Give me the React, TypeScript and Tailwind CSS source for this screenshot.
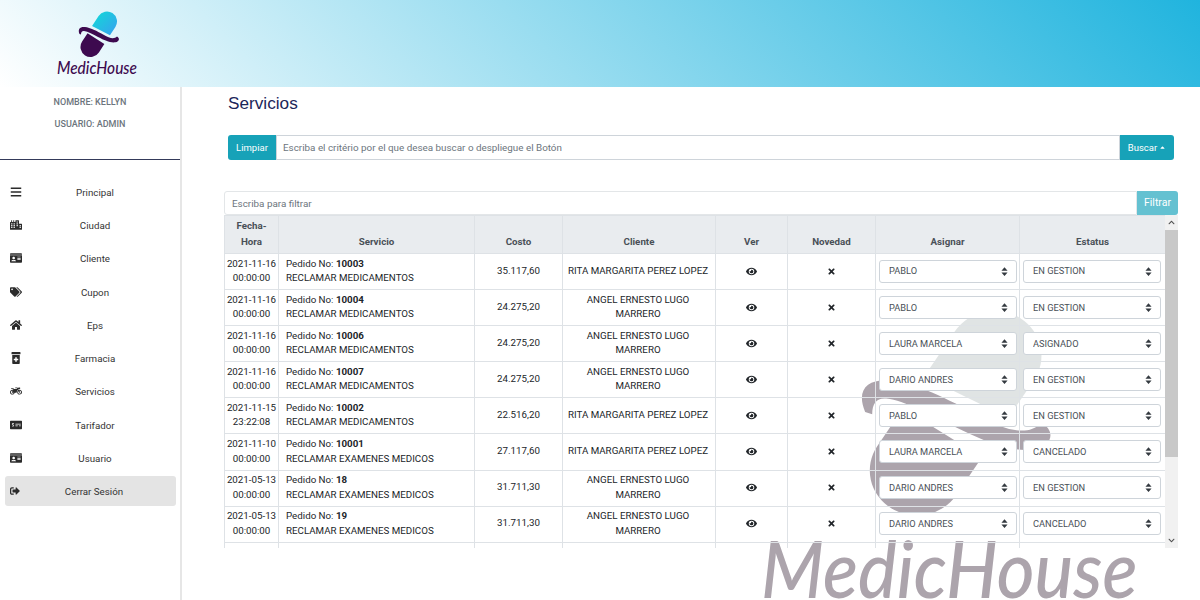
import React from "react";
import { FaBars, FaCity, FaIdCard, FaTags, FaHome, FaPrescriptionBottleAlt, FaMotorcycle, FaMoneyCheckAlt, FaSignOutAlt, FaEye, FaTimes, FaCaretUp, FaChevronUp, FaChevronDown } from "react-icons/fa";

function Logo({ top, bottom, id, className }: { top: string; bottom: string; id: string; className: string }) {
  return (
    <svg viewBox="75 8 50 52" preserveAspectRatio="none" className={className}>
      <defs>
        <linearGradient id={id} x1="0" y1="0" x2="1" y2="1">
          <stop offset="0" stopColor={top === "grad" ? "#0fdcd6" : top} />
          <stop offset="1" stopColor={top === "grad" ? "#3a9ff0" : top} />
        </linearGradient>
      </defs>
      <path d="M92.06 26.1 L98.6 16.05 A10 10 0 0 1 115.4 26.95 L109.95 35.3 Z" fill={`url(#${id})`} />
      <path d="M87.55 33.17 L104.35 44.07 L98.9 52.45 A10 10 0 0 1 82.1 41.55 Z" fill={bottom} />
      <path d="M79.5 34 C77.5 29 80 26.5 85 27 C90 27.5 97 31 104 35 C109 38 114 39.5 117 36.5 C120 38 119.5 41.5 115.5 42.3 C110 43 105 40.5 98 37 C93 34.5 88 31.5 84 31 C82 30.8 81 32 81 34.5 Z" fill={bottom} />
    </svg>
  );
}

const menu: [string, React.ComponentType<{ className?: string }>][] = [
  ["Principal", FaBars],
  ["Ciudad", FaCity],
  ["Cliente", FaIdCard],
  ["Cupon", FaTags],
  ["Eps", FaHome],
  ["Farmacia", FaPrescriptionBottleAlt],
  ["Servicios", FaMotorcycle],
  ["Tarifador", FaMoneyCheckAlt],
  ["Usuario", FaIdCard],
];

const A = "ANGEL ERNESTO LUGO MARRERO";
const R = "RITA MARGARITA PEREZ LOPEZ";
const M = "RECLAMAR MEDICAMENTOS";
const E = "RECLAMAR EXAMENES MEDICOS";
const rows = [
  ["2021-11-16", "00:00:00", "10003", M, "35.117,60", R, "PABLO", "EN GESTION"],
  ["2021-11-16", "00:00:00", "10004", M, "24.275,20", A, "PABLO", "EN GESTION"],
  ["2021-11-16", "00:00:00", "10006", M, "24.275,20", A, "LAURA MARCELA", "ASIGNADO"],
  ["2021-11-16", "00:00:00", "10007", M, "24.275,20", A, "DARIO ANDRES", "EN GESTION"],
  ["2021-11-15", "23:22:08", "10002", M, "22.516,20", R, "PABLO", "EN GESTION"],
  ["2021-11-10", "00:00:00", "10001", E, "27.117,60", R, "LAURA MARCELA", "CANCELADO"],
  ["2021-05-13", "00:00:00", "18", E, "31.711,30", A, "DARIO ANDRES", "EN GESTION"],
  ["2021-05-13", "00:00:00", "19", E, "31.711,30", A, "DARIO ANDRES", "CANCELADO"],
];

function Sel({ value }: { value: string }) {
  return (
    <div className="relative h-[23px] w-full">
      <select
        defaultValue={value}
        className="h-full w-full appearance-none rounded-[3px] border border-[#ced4da] bg-white pl-[9px] text-[9.25px] leading-none text-[#495057] outline-none"
      >
        <option>{value}</option>
      </select>
      <svg viewBox="0 0 8 10" className="pointer-events-none absolute right-[9px] top-[7px] h-[9px] w-[7px]">
        <path d="M4 0 L7.5 4 H0.5 Z M4 10 L0.5 6 H7.5 Z" fill="#343a40" />
      </svg>
    </div>
  );
}

const td = "border border-[#dee2e6] align-middle text-center p-0 pb-[1px]";
const th = "border border-[#dee2e6] bg-[#e9ecef] align-bottom p-0 pb-[3px] text-center font-bold leading-[16px] text-[#495057]";

export default function App() {
  return (
    <div className="flex h-[600px] w-[1200px] flex-col overflow-hidden bg-white font-['Roboto',sans-serif] text-[9.75px] leading-[18px] text-[#212529]">
      <header className="flex h-[87px] shrink-0 bg-[linear-gradient(45deg,#ffffff_0%,#20b4de_100%)]">
        <div className="relative w-[190px]">
          <Logo id="g1" top="grad" bottom="#3d0a4f" className="absolute left-[75px] top-[8px] h-[52px] w-[50px]" />
          <span className="absolute left-[57px] top-[56px] origin-left scale-x-90 font-['Lato',sans-serif] text-[17.2px] font-medium italic leading-[24px] text-[#3d0a4f]">MedicHouse</span>
        </div>
      </header>
      <div className="flex min-h-0 flex-1">
        <aside className="flex w-[182px] shrink-0 flex-col border-r-2 border-[#e6e6e6]">
          <div className="h-[73px] border-b border-[#343a5a] pt-[6px] text-center text-[9px] font-medium leading-[18px] text-[#6c757d]">
            <div>NOMBRE: KELLYN</div>
            <div className="mt-[4px]">USUARIO: ADMIN</div>
          </div>
          <nav className="pl-[5px] pr-[4px] pt-[16px]">
            {menu.map(([name, Icon]) => (
              <div key={name} className="flex h-[33.3px] items-center pl-[5px] pr-[6px] text-[#333]">
                <Icon className="h-[12px] w-auto shrink-0 -translate-y-px text-[#2b2b2b]" />
                <span className="flex-1 -translate-x-px text-center">{name}</span>
              </div>
            ))}
            <div className="flex h-[30px] items-center rounded-[3px] bg-[#e4e4e4] pl-[5px] pr-[6px] text-[#333]">
              <FaSignOutAlt className="h-[10px] w-auto shrink-0 text-[#2b2b2b]" />
              <span className="flex-1 -translate-x-px translate-y-px text-center">Cerrar Sesión</span>
            </div>
          </nav>
        </aside>
        <main className="relative min-w-0 flex-1 pl-[42px] pr-[22px]">
          <div className="pointer-events-none absolute left-[662px] top-[208px] h-[234px] w-[235px]">
            <Logo id="g2" top="#e0e4e4" bottom="#aca4ac" className="h-full w-full" />
          </div>
          <span className="pointer-events-none absolute left-[579px] top-[450px] origin-left scale-x-[0.91] font-['Lato',sans-serif] text-[80px] font-medium italic leading-[60px] text-[#aca4ac]">MedicHouse</span>

          <div className="relative flex flex-col">
            <h1 className="ml-[4px] mt-[5px] h-[22px] font-['Liberation_Sans',sans-serif] text-[17.2px] leading-[22px] text-[#1b2559]">Servicios</h1>
            <div className="ml-[4px] mt-[21px] flex h-[25px] w-[946px]">
              <div className="flex w-[48px] items-center justify-center rounded-l-[3px] bg-[#17a2b8] text-[9.5px] text-white">Limpiar</div>
              <div className="flex flex-1 items-center border border-[#ced4da] bg-white pl-[6px] text-[9.85px] text-[#6c757d]">Escriba el critério por el que desea buscar o despliegue el Botón</div>
              <div className="flex w-[54px] items-center justify-center gap-[2px] rounded-r-[3px] bg-[#17a2b8] text-[9.5px] text-white">Buscar<FaCaretUp className="h-[7px] w-[7px]" /></div>
            </div>
            <div className="mt-[31px] flex h-[24px] w-[954px]">
              <div className="flex flex-1 items-center rounded-l-[3px] border border-[#e3e6e8] bg-white pl-[7px] pt-px text-[9.85px] text-[#6c757d]">Escriba para filtrar</div>
              <div className="flex w-[41px] items-center justify-center rounded-r-[3px] bg-[#64c1d1] text-[10.5px] text-white">Filtrar</div>
            </div>
            <div className="flex h-[333px] w-[954px] overflow-hidden">
              <div className="w-[941px] overflow-hidden">
                <table className="w-[941px] table-fixed border-collapse leading-[14.5px]">
                  <colgroup>
                    <col className="w-[54px]" />
                    <col className="w-[196px]" />
                    <col className="w-[88px]" />
                    <col className="w-[153px]" />
                    <col className="w-[72px]" />
                    <col className="w-[88px]" />
                    <col className="w-[144px]" />
                    <col className="w-[146px]" />
                  </colgroup>
                  <thead>
                    <tr className="h-[38px]">
                      <th className={th}>Fecha-<br />Hora</th>
                      <th className={th}>Servicio</th>
                      <th className={th}>Costo</th>
                      <th className={th}>Cliente</th>
                      <th className={th}>Ver</th>
                      <th className={th}>Novedad</th>
                      <th className={th}>Asignar</th>
                      <th className={th}>Estatus</th>
                    </tr>
                  </thead>
                  <tbody>
                    {rows.map((r, i) => (
                      <tr key={i} className="h-[36.1px]">
                        <td className={td}><span className="whitespace-nowrap">{r[0]}</span><br />{r[1]}</td>
                        <td className="border border-[#dee2e6] p-0 pb-[1px] pl-[7px] align-middle">Pedido No: <b>{r[2]}</b><br />{r[3]}</td>
                        <td className={td}>{r[4]}</td>
                        <td className={td + " pl-[3px] pr-[5px]"}>{r[5]}</td>
                        <td className={td}><FaEye className="mx-auto h-[11px] w-[11px] text-[#212529]" /></td>
                        <td className={td}><FaTimes className="mx-auto h-[9px] w-[9px] text-[#212529]" /></td>
                        <td className={td + " pl-[3px] pr-[2px]"}><Sel value={r[6]} /></td>
                        <td className={td + " pl-[3px] pr-[4px]"}><Sel value={r[7]} /></td>
                      </tr>
                    ))}
                    <tr className="h-[36px]">
                      {Array.from({ length: 8 }).map((_, i) => (
                        <td key={i} className={td}></td>
                      ))}
                    </tr>
                  </tbody>
                </table>
              </div>
              <div className="flex w-[13px] flex-col bg-[#f1f1f1]">
                <div className="flex h-[15px] items-center justify-center bg-[#f1f1f1]"><FaChevronUp className="h-[7px] w-[7px] text-[#505050]" /></div>
                <div className="h-[227px] bg-[#c8c8c8]"></div>
                <div className="flex-1"></div>
                <div className="flex h-[15px] items-center justify-center"><FaChevronDown className="h-[7px] w-[7px] text-[#505050]" /></div>
              </div>
            </div>
          </div>
        </main>
      </div>
    </div>
  );
}
